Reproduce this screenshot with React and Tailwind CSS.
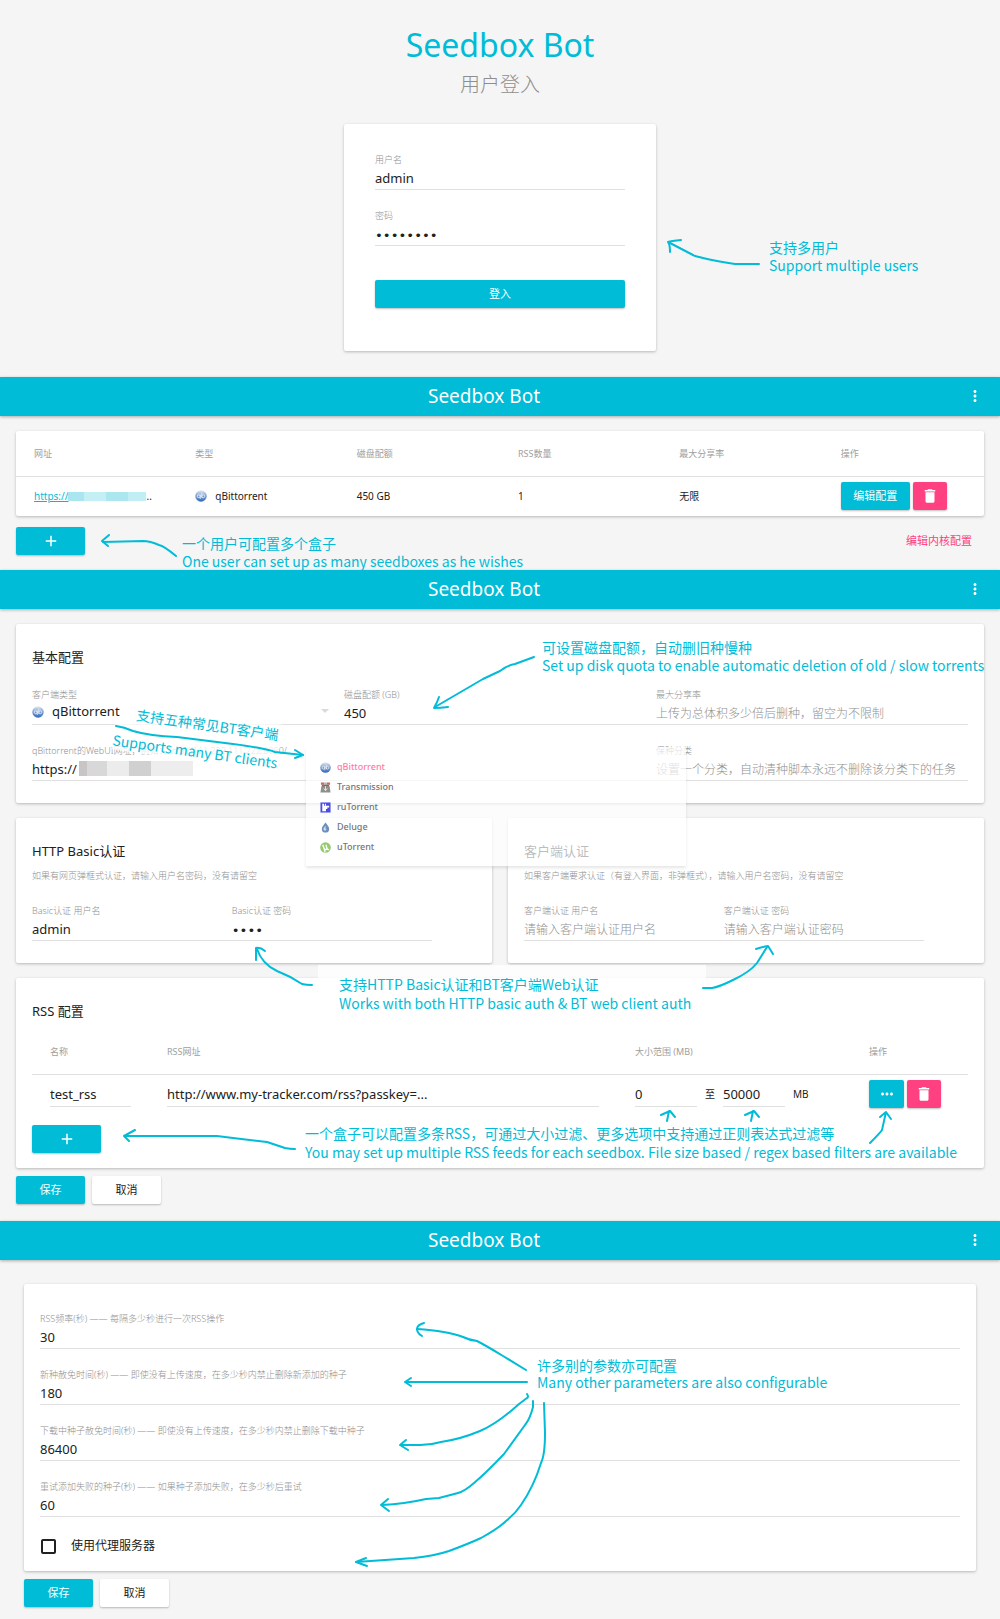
import React from "react";
import { MdAdd, MdDelete, MdMoreHoriz, MdMoreVert } from "react-icons/md";

function QBittorrentIcon({ className }) {
  return (
    <svg viewBox="0 0 24 24" className={className} aria-hidden="true">
      <defs>
        <linearGradient id="qb-fill" x1="0" y1="0" x2="0" y2="1">
          <stop offset="0" stopColor="#e4ebf4" />
          <stop offset="0.5" stopColor="#7d9fd0" />
          <stop offset="1" stopColor="#2f66bd" />
        </linearGradient>
      </defs>
      <circle cx="12" cy="12" r="11.5" fill="url(#qb-fill)" />
      <g fill="none" stroke="#f3f7fc" strokeWidth="1.5">
        <circle cx="7.5" cy="12.5" r="3" />
        <path d="M10.5 9v9M13.500 5.500v10" />
        <circle cx="16.5" cy="12.500" r="3" />
      </g>
    </svg>
  );
}

function TransmissionIcon({ className }) {
  return (
    <svg viewBox="0 0 24 24" className={className} aria-hidden="true">
      <path d="M3 9h18l2 14H1z" fill="#8d8f8b" />
      <path d="M2 1h7v5H2zM15 1h7v5h-7z" fill="#dd5f5f" />
      <path d="M9 1h6v8H9z" fill="#b8b8b4" />
      <path d="M4 6h16v4H4z" fill="#77706c" />
      <path d="M12 9v10M8 14l4 5 4-5" fill="none" stroke="#e4e6e2" strokeWidth="2" />
    </svg>
  );
}

function RuTorrentIcon({ className }) {
  return (
    <svg viewBox="0 0 24 24" className={className} aria-hidden="true">
      <path d="M1 1h22v22H1z" fill="#4b4be8" />
      <path d="M5 4h4v4h2V4h2v4h7v4h-4v3h-3v5H5z" fill="#fff" />
      <path d="M17 15h3v5h-3z" fill="#4b4be8" />
    </svg>
  );
}

function DelugeIcon({ className }) {
  return (
    <svg viewBox="0 0 24 24" className={className} aria-hidden="true">
      <path d="M12 1c4 6 8 9 8 14a8 8 0 0 1-16 0C4 10 8 7 12 1z" fill="#6d8fba" />
      <path d="M13 8c-4 3-6 5-5 9 2 3 6 2 6-1-2 0-3-2-1-8z" fill="#d7e2f0" />
    </svg>
  );
}

function UTorrentIcon({ className }) {
  return (
    <svg viewBox="0 0 24 24" className={className} aria-hidden="true">
      <circle cx="12" cy="12" r="11.5" fill="#93cb6d" />
      <path
        d="M6 6l3 8c1 3 5 3 6 0L13 6M15 13c1 4 3 4 5 3M9 14l2 8"
        fill="none"
        stroke="#fff"
        strokeWidth="3"
      />
    </svg>
  );
}

const clients = [
  { name: "qBittorrent", Icon: QBittorrentIcon },
  { name: "Transmission", Icon: TransmissionIcon },
  { name: "ruTorrent", Icon: RuTorrentIcon },
  { name: "Deluge", Icon: DelugeIcon },
  { name: "uTorrent", Icon: UTorrentIcon },
];

const cardClass = "rounded-xs bg-white shadow-[0_1px_3px_rgba(0,0,0,0.25)]";
const inputClass =
  "block w-full border-b border-[#e0e0e0] bg-transparent text-[13px] text-[#212121] outline-none placeholder:text-[12px] placeholder:font-light placeholder:text-[#909090]";
const thClass = "pl-[18px] text-left text-[9px] font-normal text-[#9e9e9e]";

function Field({ id, label, type = "text", value, placeholder, children }) {
  return (
    <div className="relative pt-5">
      <label htmlFor={id} className="block text-[9px] leading-3 font-light whitespace-nowrap text-[#909090]">
        {label}
      </label>
      {children || (
        <input
          id={id}
          type={type}
          defaultValue={value}
          placeholder={placeholder}
          className={
            type === "password" && value
              ? "block h-6 w-full border-b border-[#e0e0e0] bg-transparent pt-1 font-['DejaVu_Sans_Mono',monospace] text-[13px] text-[#212121] outline-none"
              : `${inputClass} h-6`
          }
        />
      )}
    </div>
  );
}

function Button({ tone = "cyan", className = "w-[69px]", label, children }) {
  const tones = {
    cyan: "bg-[#00bcd7] text-white",
    pink: "bg-[#ff4081] text-white",
    white: "bg-white text-[#212121]",
  };
  return (
    <button
      type="button"
      aria-label={label}
      className={`flex h-7 shrink-0 items-center justify-center rounded-xs text-[11px] shadow-[0_1px_2px_rgba(0,0,0,0.25)] ${tones[tone]} ${className}`}
    >
      {children}
    </button>
  );
}

function AppBar() {
  return (
    <header className="relative flex h-[39px] items-center justify-center bg-[#00bcd7] pr-8 pb-[2px] text-white shadow-[0_1px_3px_rgba(0,0,0,0.3)]">
      <h2 className="text-[19px] leading-6">Seedbox Bot</h2>
      <button type="button" aria-label="更多" className="absolute right-4">
        <MdMoreVert className="size-[18px]" />
      </button>
    </header>
  );
}

function Arrows({ viewBox, paths }) {
  return (
    <svg
      viewBox={viewBox}
      className="pointer-events-none absolute top-0 left-0 w-full"
      fill="none"
      stroke="#00bcd7"
      strokeWidth="2"
      strokeLinecap="round"
      strokeLinejoin="round"
      aria-hidden="true"
    >
      {paths.map((d) => (
        <path key={d} d={d} />
      ))}
    </svg>
  );
}

function Note({ className, zh, en }) {
  return (
    <div className={`absolute font-['Noto_Sans_CJK_SC',sans-serif] text-[14px] whitespace-nowrap text-[#00bcd7] ${className}`}>
      <p>{zh}</p>
      <p>{en}</p>
    </div>
  );
}

function CardTitle({ children }) {
  return <h3 className="pt-6 pb-[3px] text-[13px] leading-[18px] text-[#212121]">{children}</h3>;
}

function LoginSection() {
  return (
    <section className="relative pt-[27px] pb-[26px]">
      <h1 className="text-center text-[32px] leading-9 text-[#00bcd7]">Seedbox Bot</h1>
      <p className="mt-[6px] mb-[23px] text-center text-[20px] leading-8 font-light text-[#8e8e8e]">用户登入</p>
      <form className={`mx-auto w-[312px] px-[31px] pt-[10px] pb-[43px] ${cardClass}`}>
        <Field id="user" label="用户名" value="admin" />
        <Field id="pass" label="密码" type="password" value="password" />
        <Button className="mt-[34px] w-full">登入</Button>
      </form>
      <Note className="top-[238px] left-[769px] leading-[18px]" zh="支持多用户" en="Support multiple users" />
      <Arrows
        viewBox="0 0 1000 377"
        paths={[
          "M759 264H735Q715 261 703 258T693 255L670 243",
          "M681 240Q671 241 668 242Q670 244 670 252",
        ]}
      />
    </section>
  );
}

function ListSection() {
  return (
    <section>
      <AppBar />
      <div className="relative px-4 pt-[15px] pb-[15px]">
        <table className={`w-full table-fixed ${cardClass}`}>
          <thead>
            <tr className="h-[45px] border-b border-[#e0e0e0]">
              {["网址", "类型", "磁盘配额", "RSS数量", "最大分享率", "操作"].map((t) => (
                <th key={t} scope="col" className={thClass}>{t}</th>
              ))}
            </tr>
          </thead>
          <tbody className="text-[10px] text-[#212121]">
            <tr className="h-10">
              <td className="pl-[18px]">
                <div className="flex items-center">
                  <a href="#seedbox" className="flex items-center text-[#00bcd7] underline">
                    https://
                    <span className="flex h-[9px]">
                      <span className="w-4 bg-[#a9e6ef]" />
                      <span className="w-[22px] bg-[#c4eff5]" />
                      <span className="w-[22px] bg-[#ace7ef]" />
                      <span className="w-[18px] bg-[#c0eef4]" />
                    </span>
                  </a>
                  <span>..</span>
                </div>
              </td>
              <td className="pl-[18px]">
                <div className="flex items-center gap-2">
                  <QBittorrentIcon className="size-3" />
                  qBittorrent
                </div>
              </td>
              <td className="pl-[18px]">450 GB</td>
              <td className="pl-[18px]">1</td>
              <td className="pl-[18px]">无限</td>
              <td className="pl-[18px]">
                <div className="flex gap-[3px]">
                  <Button>编辑配置</Button>
                  <Button tone="pink" className="w-[34px]" label="删除">
                    <MdDelete className="size-[18px]" />
                  </Button>
                </div>
              </td>
            </tr>
          </tbody>
        </table>
        <div className="mt-[11px] flex justify-between">
          <Button label="添加盒子"><MdAdd className="size-[18px]" /></Button>
          <button type="button" className="h-7 px-3 text-[11px] text-[#ff4081]">编辑内核配置</button>
        </div>
        <Note className="top-[118px] left-[182px] leading-[18px]" zh="一个用户可配置多个盒子" en="One user can set up as many seedboxes as he wishes" />
        <Arrows
          viewBox="0 416 1000 154"
          paths={["M176 556Q164 546 159 545Q150 541 143 541L103 542", "M109 535L102 541L108 546"]}
        />
      </div>
    </section>
  );
}

function ClientMenu() {
  return (
    <ul
      role="listbox"
      aria-label="客户端类型"
      className="absolute top-[138px] left-[306px] h-[119px] w-[380px] bg-white/70 pt-[10px] shadow-[0_2px_3px_rgba(0,0,0,0.1)]"
    >
      {clients.map(({ name, Icon }, i) => (
        <li
          key={name}
          role="option"
          aria-selected={i === 0}
          className={`flex h-5 items-center gap-[6px] pl-[14px] text-[9px] font-medium ${i === 0 ? "text-[#ff7ba7]" : "text-[#757575]"}`}
        >
          <Icon className="size-[11px]" />
          {name}
        </li>
      ))}
    </ul>
  );
}

function BasicCard() {
  return (
    <div className={`px-4 pb-[22px] ${cardClass}`}>
      <CardTitle>基本配置</CardTitle>
      <div className="grid grid-cols-3">
        <Field id="client" label="客户端类型">
          <div className="relative">
            <select id="client" defaultValue="qBittorrent" className={`${inputClass} h-6 appearance-none pb-[2px] pl-5`}>
              {clients.map(({ name }) => (
                <option key={name}>{name}</option>
              ))}
            </select>
            <QBittorrentIcon className="pointer-events-none absolute top-[5px] left-0 size-3" />
            <svg viewBox="0 0 8 4" className="pointer-events-none absolute top-2 right-[15px] h-1 w-2" aria-hidden="true">
              <path d="M0 0h8L4 4z" fill="#dadada" />
            </svg>
          </div>
        </Field>
        <Field id="quota" label="磁盘配额 (GB)" value="450" />
        <Field id="ratio" label="最大分享率" placeholder="上传为总体积多少倍后删种，留空为不限制" />
        <div className="col-span-2">
          <Field id="webui" label="qBittorrent的WebUI网址，例如：http://111.222.111.222:8080/">
            <div className="relative">
              <input id="webui" type="text" defaultValue="https://" className={`${inputClass} h-6`} />
              <span className="absolute top-1 left-[47px] flex h-[15px]">
                <span className="w-2 bg-[#c8c5c5]" />
                <span className="w-5 bg-[#d8d8d8]" />
                <span className="w-[22px] bg-[#ececec]" />
                <span className="w-[22px] bg-[#d0d0d0]" />
                <span className="w-[42px] bg-[#ededed]" />
              </span>
            </div>
          </Field>
        </div>
        <Field id="category" label="保种分类" placeholder="设置一个分类，自动清种脚本永远不删除该分类下的任务" />
      </div>
    </div>
  );
}

function AuthCard({ title, hint, children }) {
  return (
    <div className={`px-4 pb-[22px] ${cardClass}`}>
      <CardTitle>{title}</CardTitle>
      <p className="mt-1 text-[9px] leading-[18px] font-light text-[#909090]">{hint}</p>
      <div className="grid w-[90%] grid-cols-2">{children}</div>
    </div>
  );
}

function RssCard() {
  return (
    <div className={`px-4 pb-[15px] ${cardClass}`}>
      <CardTitle>RSS 配置</CardTitle>
      <table className="mt-[6px] w-full table-fixed">
        <thead>
          <tr className="h-[45px] border-b border-[#e0e0e0]">
            <th scope="col" className={`w-1/8 ${thClass}`}>名称</th>
            <th scope="col" className={`w-1/2 ${thClass}`}>RSS网址</th>
            <th scope="col" className={`w-1/4 ${thClass}`}>大小范围 (MB)</th>
            <th scope="col" className={`w-1/8 ${thClass}`}>操作</th>
          </tr>
        </thead>
        <tbody className="text-[10px] text-[#212121]">
          <tr className="h-10">
            <td className="px-[18px]">
              <input type="text" aria-label="名称" defaultValue="test_rss" className={`${inputClass} h-[25px]`} />
            </td>
            <td className="px-[18px]">
              <input type="text" aria-label="RSS网址" defaultValue="http://www.my-tracker.com/rss?passkey=..." className={`${inputClass} h-[25px]`} />
            </td>
            <td className="px-[18px]">
              <div className="flex items-center gap-2">
                <input type="text" aria-label="最小 (MB)" defaultValue="0" className="h-[25px] w-[62px] border-b border-[#e0e0e0] bg-transparent text-[13px] outline-none" />
                至
                <input type="text" aria-label="最大 (MB)" defaultValue="50000" className="h-[25px] w-[62px] border-b border-[#e0e0e0] bg-transparent text-[13px] outline-none" />
                MB
              </div>
            </td>
            <td className="pl-[18px]">
              <div className="flex gap-[3px]">
                <Button className="w-[35px]" label="更多选项"><MdMoreHoriz className="size-[18px]" /></Button>
                <Button tone="pink" className="w-[34px]" label="删除"><MdDelete className="size-[18px]" /></Button>
              </div>
            </td>
          </tr>
        </tbody>
      </table>
      <Button className="mt-[11px] w-[69px]" label="添加RSS"><MdAdd className="size-[18px]" /></Button>
    </div>
  );
}

function ConfigSection() {
  return (
    <section>
      <AppBar />
      <div className="relative px-4 pt-[15px] pb-[17px]">
        <div className="flex flex-col gap-[15px]">
          <BasicCard />
          <div className="grid grid-cols-2 gap-4">
            <AuthCard title="HTTP Basic认证" hint="如果有网页弹框式认证，请输入用户名密码，没有请留空">
              <Field id="basic-user" label="Basic认证 用户名" value="admin" />
              <Field id="basic-pass" label="Basic认证 密码" type="password" value="pass" />
            </AuthCard>
            <AuthCard title="客户端认证" hint="如果客户端要求认证（有登入界面，非弹框式），请输入用户名密码，没有请留空">
              <Field id="client-user" label="客户端认证 用户名" placeholder="请输入客户端认证用户名" />
              <Field id="client-pass" label="客户端认证 密码" type="password" placeholder="请输入客户端认证密码" />
            </AuthCard>
          </div>
          <RssCard />
        </div>
        <div className="mt-2 flex gap-[7px]">
          <Button>保存</Button>
          <Button tone="white">取消</Button>
        </div>

        <ClientMenu />
        <Note className="top-[29px] left-[542px] leading-[18px]" zh="可设置磁盘配额，自动删旧种慢种" en="Set up disk quota to enable automatic deletion of old / slow torrents" />
        <div className="absolute top-[104px] left-[114px] rotate-[8deg] font-['Noto_Sans_CJK_SC',sans-serif] text-[14px] leading-5 whitespace-nowrap text-[#00bcd7]">
          <p className="ml-5 bg-white/75">支持五种常见BT客户端</p>
          <p className="bg-white/75 pt-2">Supports many BT clients</p>
        </div>
        <Note className="top-[356px] left-[318px] bg-white/75 py-[10px] pr-[15px] pl-[21px] leading-[19px]" zh="支持HTTP Basic认证和BT客户端Web认证" en="Works with both HTTP basic auth & BT web client auth" />
        <Note className="top-[515px] left-[305px] leading-[19px]" zh="一个盒子可以配置多条RSS，可通过大小过滤、更多选项中支持通过正则表达式过滤等" en="You may set up multiple RSS feeds for each seedbox. File size based / regex based filters are available" />
        <Arrows
          viewBox="0 609 1000 612"
          paths={[
            "M534 657L515 664Q508 665 500 671L483 679L435 707",
            "M439 697Q437 703 434 708Q440 708 448 707",
            "M116 726Q124 727 133 731Q150 736 177 737L233 744Q264 748 275 752L303 755",
            "M295 750L303 755L295 758",
            "M312 985Q306 985 302 984Q290 976 277 971Q262 964 257 949",
            "M265 951Q260 947 256 948V960",
            "M703 988H712Q719 987 733 980Q750 972 757 963L767 947",
            "M756 949Q762 947 768 946L773 954",
            "M295 1149Q290 1149 285 1148L267 1142Q240 1139 217 1136H125",
            "M135 1130L124 1136L129 1141",
            "M667 1121L669 1111M661 1115L670 1111L675 1117",
            "M751 1121L753 1111M745 1115L754 1111L759 1117",
            "M870 1143Q880 1133 882 1130L886 1112M880 1117L886 1112L891 1119",
          ]}
        />
      </div>
    </section>
  );
}

function SettingsSection() {
  return (
    <section>
      <AppBar />
      <div className="relative px-6 pt-6 pb-3">
        <div className={`px-4 pt-[9px] pb-4 ${cardClass}`}>
          <Field id="rss-rate" label="RSS频率(秒) —— 每隔多少秒进行一次RSS操作" value="30" />
          <Field id="new-grace" label="新种赦免时间(秒) —— 即使没有上传速度，在多少秒内禁止删除新添加的种子" value="180" />
          <Field id="down-grace" label="下载中种子赦免时间(秒) —— 即使没有上传速度，在多少秒内禁止删除下载中种子" value="86400" />
          <Field id="retry" label="重试添加失败的种子(秒) —— 如果种子添加失败，在多少秒后重试" value="60" />
          <label className="mt-5 flex w-fit items-center gap-[15px] pl-[1px] text-[12px] leading-[18px] text-[#212121]">
            <input type="checkbox" className="size-[15px] appearance-none rounded-xs border-2 border-[#212121] checked:bg-[#00bcd7]" />
            使用代理服务器
          </label>
        </div>
        <div className="mt-2 flex gap-[7px]">
          <Button>保存</Button>
          <Button tone="white">取消</Button>
        </div>
        <Note className="top-[97px] left-[537px] leading-[17px]" zh="许多别的参数亦可配置" en="Many other parameters are also configurable" />
        <Arrows
          viewBox="0 1260 1000 359"
          paths={[
            "M526 1370L503 1356Q485 1345 477 1341Q469 1340 463 1337Q447 1331 417 1329",
            "M424 1323Q417 1325 417 1329Q417 1333 422 1336",
            "M527 1382H405M411 1378L405 1382L411 1386",
            "M527 1394Q529 1397 527 1398L519 1404Q497 1424 480 1431Q461 1439 441 1442Q431 1445 420 1445H401",
            "M406 1440L400 1445L408 1450",
            "M533 1401V1407Q530 1419 525 1425L504 1454Q486 1473 474 1483Q465 1491 458 1493L439 1498L426 1499Q404 1504 382 1505",
            "M388 1499L381 1505L389 1511",
            "M544 1403L545 1433Q545 1455 541 1463Q534 1486 521 1505Q515 1514 506 1521Q499 1528 481 1538Q468 1544 449 1551Q434 1556 414 1558L356 1562",
            "M366 1558L356 1562L367 1566",
          ]}
        />
      </div>
    </section>
  );
}

export default function App() {
  return (
    <main className="bg-[#f5f5f5] font-['Noto_Sans','Noto_Sans_CJK_SC',sans-serif]">
      <LoginSection />
      <ListSection />
      <ConfigSection />
      <SettingsSection />
    </main>
  );
}
